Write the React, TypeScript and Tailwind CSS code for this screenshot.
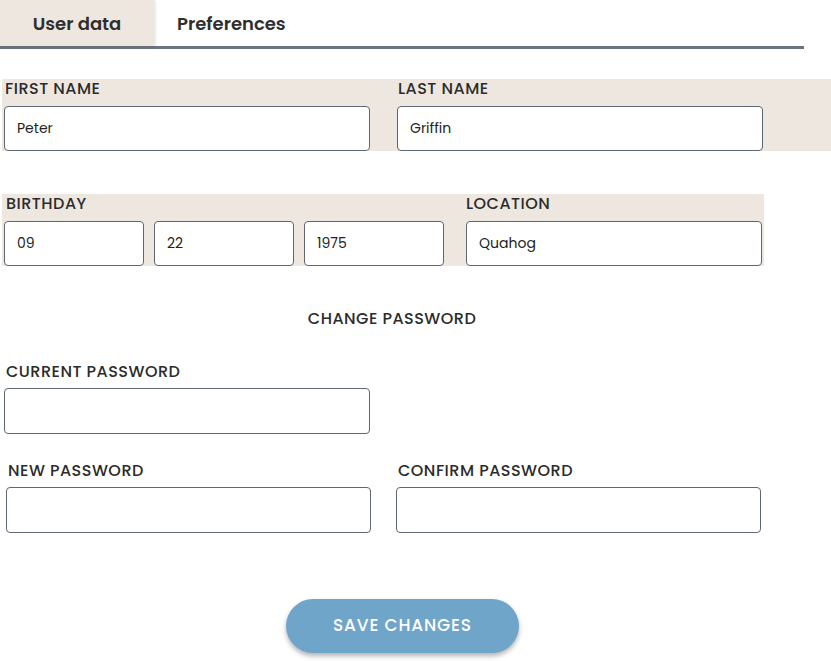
import React from "react";

const font = { fontFamily: "Poppins, Inter, 'Noto Sans', sans-serif" };

const labelCls = "pt-[1px] leading-[18px] text-[16px] font-medium tracking-[0.03em] text-[#2b2b2b]";
const inputCls = "rounded-[4px] border border-[#5d6872] bg-white flex items-center pl-[12px] text-[14px] text-[#222]";

function Field({ label, value, w }: { label: string; value?: string; w: string }) {
  return (
    <div className="flex flex-col">
      <div className={`h-[27px] ${labelCls} pl-[1px]`}>{label}</div>
      <div className={`${w} h-[45px] ${inputCls}`}>{value}</div>
    </div>
  );
}

export default function App() {
  return (
    <div className="w-[831px] h-[661px] bg-white relative" style={font}>
      <div className="w-[804px] h-[49px] flex border-b-[3px] border-[#6b7580]">
        <div className="w-[154px] h-[46px] bg-[#eee7e0] flex items-center justify-center pt-[1px] text-[18px] font-semibold text-[#2e2e2e] shadow-[1px_0_3px_rgba(0,0,0,0.15)]">
          User data
        </div>
        <div className="h-[46px] flex items-center pt-[1px] pl-[23px] text-[18px] font-semibold text-[#2e2e2e]">Preferences</div>
      </div>

      <div className="mt-[30px] ml-[2px] w-[829px] h-[72px] bg-[#eee7e0] flex gap-[27px] pl-[2px]">
        <Field label="FIRST NAME" value="Peter" w="w-[366px]" />
        <Field label="LAST NAME" value="Griffin" w="w-[366px]" />
      </div>

      <div className="mt-[43px] ml-[2px] w-[762px] h-[72px] bg-[#eee7e0] flex gap-[22px] pl-[2px]">
        <div className="flex flex-col">
          <div className={`h-[27px] ${labelCls} pl-[2px]`}>BIRTHDAY</div>
          <div className="flex gap-[10px]">
            {["09", "22", "1975"].map((v) => (
              <div key={v} className={`w-[140px] h-[45px] ${inputCls}`}>
                {v}
              </div>
            ))}
          </div>
        </div>
        <div className="flex flex-col">
          <div className={`h-[27px] ${labelCls}`}>LOCATION</div>
          <div className={`w-[296px] h-[45px] ${inputCls}`}>Quahog</div>
        </div>
      </div>

      <div className="mt-[41px] w-[784px] text-center leading-[24px] text-[16px] font-medium tracking-[0.03em] text-[#2b2b2b]">CHANGE PASSWORD</div>

      <div className="mt-[31px] ml-[4px] flex flex-col">
        <div className={`h-[26px] ${labelCls} pl-[2px]`}>CURRENT PASSWORD</div>
        <div className="w-[366px] h-[46px] rounded-[4px] border border-[#5d6872] bg-white" />
      </div>

      <div className="mt-[27px] ml-[6px] flex gap-[25px]">
        <div className="flex flex-col">
          <div className={`h-[26px] ${labelCls} pl-[2px]`}>NEW PASSWORD</div>
          <div className="w-[365px] h-[46px] rounded-[4px] border border-[#5d6872] bg-white" />
        </div>
        <div className="flex flex-col">
          <div className={`h-[26px] ${labelCls} pl-[2px]`}>CONFIRM PASSWORD</div>
          <div className="w-[365px] h-[46px] rounded-[4px] border border-[#5d6872] bg-white" />
        </div>
      </div>

      <div className="mt-[66px] ml-[286px]">
        <button className="w-[233px] h-[54px] rounded-full bg-[#70a5ca] text-white text-[17px] font-medium tracking-[0.05em] shadow-[0_3px_5px_rgba(0,0,0,0.3)]">
          SAVE CHANGES
        </button>
      </div>
    </div>
  );
}
